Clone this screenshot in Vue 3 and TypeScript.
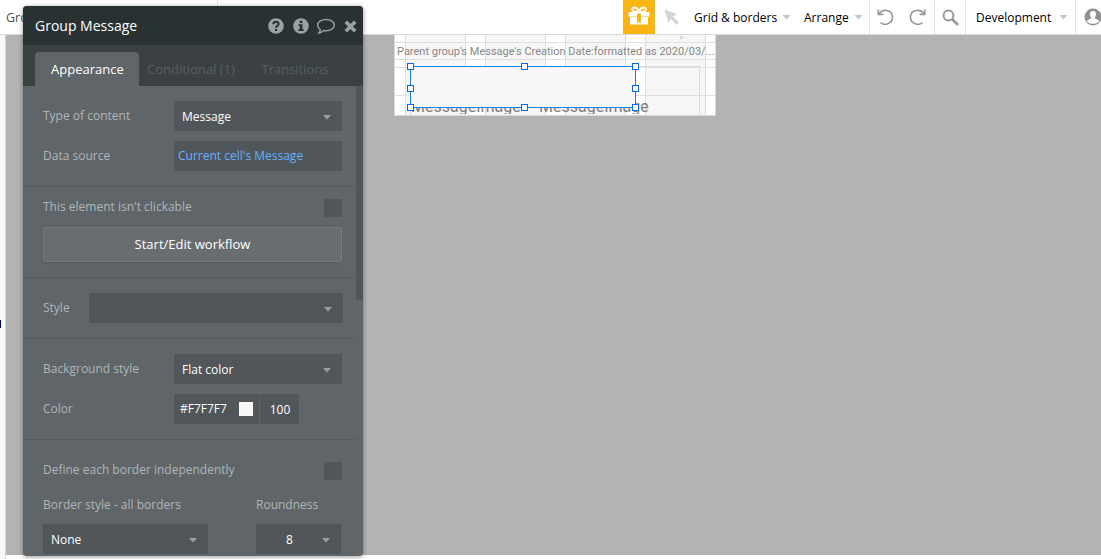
<script setup lang="ts">
const tabs: string[] = ['Appearance', 'Conditional (1)', 'Transitions']
const columns: number[] = [11, 71, 151, 231]
const rows: number[] = [8, 25, 33, 61]
const handles: [number, number][] = [
  [0, 0], [114, 0], [225, 0],
  [0, 22], [225, 22],
  [0, 41], [114, 41], [225, 41],
]
</script>

<template>
  <div class="app">
    <header class="topbar">
      <span class="crumb">Gro</span>
      <div class="crumb-line"></div>
      <div class="gift">
        <svg width="22" height="20" viewBox="0 0 22 20">
          <path d="M10 6C7 6 4 5.500 4 3.300 4 1 8 .2 11 5 14 .2 18 1 18 3.300 18 5.500 15 6 12 6" fill="none" stroke="#fff" stroke-width="1.800" />
          <path fill="#fff" d="M1.500 6h19q1 0 1 1v3.500h-21V7q0-1 1-1zM2 11h18v6.500q0 1-1 1H3q-1 0-1-1z" />
          <path fill="#fab515" d="M9 7.500h4v9H9z" />
        </svg>
      </div>
      <svg class="pointer" width="16" height="17" viewBox="0 0 16 17"><path fill="#d5d5d5" d="M.5.500 13 5.300 9 7.500l6 6-2.300 2.500-6-6.200L4.500 14z" /></svg>
      <span class="menu grid-menu">Grid &amp; borders</span><i class="arrow light"></i>
      <span class="menu arrange">Arrange</span><i class="arrow light"></i>
      <div class="group undo">
        <svg width="17" height="18" viewBox="0 0 17 18"><path d="M1.300 1.500v4.800h5.200M2 6.200C5 .3 15.500 1.300 15.500 9c0 7-8.500 9-12 5.500" fill="none" stroke="#999" stroke-width="1.700" /></svg>
        <svg width="17" height="18" viewBox="0 0 17 18"><path d="M15.700 1.500v4.800h-5.200M15 6.200C12 .3 1.500 1.300 1.500 9c0 7 8.500 9 12 5.500" fill="none" stroke="#999" stroke-width="1.700" /></svg>
      </div>
      <div class="group search">
        <svg width="17" height="17" viewBox="0 0 17 17"><circle cx="6.500" cy="6.500" r="4.900" fill="none" stroke="#999" stroke-width="2" /><path d="m10 10 6 6" stroke="#999" stroke-width="2.600" /></svg>
      </div>
      <div class="group dev"><span class="menu">Development</span><i class="arrow light"></i></div>
      <div class="group user">
        <svg width="18" height="18" viewBox="0 0 18 18"><circle cx="9" cy="9" r="8.500" fill="#909090" /><path fill="#fff" d="M9 3c2.200 0 3.300 1.600 3 3.700-.1 1.200-.6 2-1 2.600v1.200l3.200 1.400q.8.400.8 1.500C13.500 15 11.500 15.800 9 15.800S4.500 15 3 13.400q0-1.100.8-1.500L7 10.500V9.300C6.500 8.700 6.100 7.900 6 6.700 5.700 4.600 6.800 3 9 3z" /></svg>
      </div>
    </header>

    <main class="workspace">
      <aside class="rail"><i></i></aside>
      <section class="canvas">
        <div class="page">
          <i v-for="c in columns" :key="'c' + c" class="column" :style="{ left: c - 1 + 'px' }"></i>
          <i v-for="r in rows" :key="'r' + r" class="row-line" :style="{ top: r - 1 + 'px' }"></i>
          <i class="dot"></i>
          <div class="date">Parent group's Message's Creation Date:formatted as 2020/03/...</div>
          <div class="outer-group"></div>
          <div class="image-text first">MessageImage</div>
          <div class="image-text second">MessageImage</div>
          <div class="selected">
            <i v-for="(h, n) in handles" :key="n" class="handle" :style="{ left: h[0] - 4 + 'px', top: h[1] - 4 + 'px' }"></i>
          </div>
        </div>
      </section>
    </main>

    <div class="panel">
      <div class="title">
        <span>Group Message</span>
        <svg class="q" width="16" height="16" viewBox="0 0 16 16"><circle cx="8" cy="8" r="7.800" /><path d="M5.300 6.200C5.300 2.800 10.700 3 10.600 6 10.500 8 8 7.700 8 9.800" fill="none" stroke="#293133" stroke-width="2" /><path d="M7 11h2.200v2.100H7z" fill="#293133" /></svg>
        <svg class="info" width="16" height="16" viewBox="0 0 16 16"><circle cx="8" cy="8" r="7.800" /><path d="M6.700 2.700h2.700v2.200H6.700zM5.500 6.300h4v5h1.200v1.800H5.300v-1.800h1.400V8H5.500z" fill="#293133" /></svg>
        <svg class="chat" width="20" height="17" viewBox="0 0 20 17"><path d="M10 1.500c4.700 0 8.300 2.400 8.300 5.600s-3.600 5.700-8.300 5.700q-1.300 0-2.400-.2C6.200 14 4.500 15 2.800 15q1.400-1.500 1.500-3.500C2.600 10.400 1.600 8.900 1.600 7.100c0-3.200 3.700-5.600 8.400-5.600z" fill="none" stroke="#98a1a6" stroke-width="1.400" /></svg>
        <svg class="close" width="13" height="13" viewBox="0 0 13 13"><path d="m1.800 1.800 9.400 9.400m0-9.400-9.400 9.400" stroke="#98a1a6" stroke-width="3.700" /></svg>
      </div>
      <nav class="tabs">
        <div v-for="(tab, n) in tabs" :key="tab" class="tab" :class="['tab' + n, { active: n === 0 }]"><span>{{ tab }}</span></div>
      </nav>
      <div class="body">
        <div class="fields">
          <section class="s1">
            <div class="row"><label class="l-type">Type of content</label><div class="select wide"><span class="v-message">Message</span><i class="arrow"></i></div></div>
            <div class="row second-row"><label class="l-data">Data source</label><div class="select wide source"><span>Current cell's Message</span></div></div>
          </section>
          <section class="s2">
            <div class="row check-row"><label class="l-click">This element isn't clickable</label><i class="check"></i></div>
            <button><span>Start/Edit workflow</span></button>
          </section>
          <section class="s3">
            <div class="row"><label class="l-style">Style</label><div class="select style"><i class="arrow"></i></div></div>
          </section>
          <section class="s4">
            <div class="row"><label class="l-bg">Background style</label><div class="select wide"><span class="v-flat">Flat color</span><i class="arrow"></i></div></div>
            <div class="row second-row"><label class="l-color">Color</label>
              <div class="color"><span>#F7F7F7</span><i></i></div><div class="opacity">100</div>
            </div>
          </section>
          <section class="s5">
            <div class="row check-row"><label class="l-define">Define each border independently</label><i class="check"></i></div>
            <div class="pair">
              <div class="border-style"><label class="l-border">Border style - all borders</label><div class="select"><span>None</span><i class="arrow"></i></div></div>
              <div class="roundness"><label class="l-round">Roundness</label><div class="select"><span>8</span><i class="arrow"></i></div></div>
            </div>
          </section>
        </div>
        <div class="scroll"></div>
      </div>
    </div>
  </div>
</template>

<style>
html, body { margin: 0; overflow: hidden; }
</style>
<style scoped>
* { box-sizing: border-box; }
i { display: block; flex: none; }
svg { display: block; flex: none; }
.app { position: relative; width: 1101px; height: 559px; overflow: hidden; background: #fff; font: 12px "Open Sans", sans-serif; }
.topbar { display: flex; align-items: center; height: 35px; border-bottom: 1px solid #d9d9d9; color: #000; white-space: nowrap; }
.topbar > * { flex: none; }
.crumb { width: 217px; padding-left: 6px; font-size: 12.500px; color: #4a5053; }
.crumb-line { width: 1px; height: 34px; background: #e4e4e4; }
.gift { display: flex; align-items: center; justify-content: center; width: 32px; height: 34px; margin-left: 405px; background: #fab515; }
.gift svg { margin-top: -2px; }
.pointer { margin-left: 9px; }
.grid-menu { width: 88px; margin-left: 14px; }
.arrange { width: 50px; margin-left: 13px; }
.arrow { width: 9px; height: 5px; background: #9a9fa2; clip-path: polygon(0 0, 100% 0, 50% 100%); }
.arrow.light { background: #bfc8d0; }
.arrange + .arrow { margin-right: 6px; }
.group { display: flex; align-items: center; height: 34px; border-left: 1px solid #e4e4e4; }
.undo { width: 65px; padding-left: 7px; gap: 15px; }
.search { width: 31px; padding-left: 7px; }
.dev { width: 110px; padding-left: 10px; }
.dev .menu { width: 83px; }
.user { width: 26px; padding-left: 8px; }
.workspace { display: flex; height: 520px; }
.rail { width: 6px; height: 524px; padding-top: 285px; background: #f9f9f9; border-right: 1px solid #d5d5d5; }
.rail i { width: 1px; height: 8px; background: #000080; }
.canvas { flex: 1; background: #b3b3b3; padding-left: 388px; }
.page { position: relative; width: 322px; height: 81px; overflow: hidden; background: #fff; border: 1px solid #d9d9d9; border-top: 0; }
.column { position: absolute; top: 0; width: 61px; height: 81px; background: #f6f6f6; border: solid #dfdfdf; border-width: 0 1px; }
.column:nth-child(n+2) { margin-left: 20px; }
.row-line { position: absolute; left: 0; width: 320px; height: 1px; background: #dfdfdf; }
.dot { position: absolute; left: 285px; top: 1px; width: 3px; height: 3px; border: 1px solid #d5d5d5; }
.date { position: absolute; left: 2px; top: 8px; font: 11px/17px Roboto, sans-serif; color: #888; white-space: nowrap; }
.outer-group { position: absolute; left: 15px; top: 31px; width: 290px; height: 60px; border: 1px solid #d9d9d9; }
.image-text { position: absolute; top: 62px; height: 17px; overflow: hidden; font: 16px/20px Roboto, sans-serif; color: #7f7f7f; white-space: nowrap; }
.first { left: 16px; }
.second { left: 144px; }
.selected { position: absolute; left: 15px; top: 31px; width: 226px; height: 42px; background: #f7f7f7; border: 1px solid #1485e8; }
.handle { position: absolute; width: 7px; height: 7px; background: #fff; border: 1px solid #0866f5; }
.panel { position: absolute; left: 23px; top: 6px; width: 340px; height: 550px; overflow: hidden; border-radius: 4px; background: #5f6568; box-shadow: 0 1px 5px #0006; color: #fff; white-space: nowrap; }
.title { display: flex; height: 39px; align-items: center; padding: 1px 5px 0 12px; background: #293133; }
.title > span { width: 232.500px; margin-top: -1px; font-size: 14px; }
.title > span { flex: none; }
.title svg { fill: #98a1a6; }
.info { margin-left: 9px; }
.chat { margin-left: 7px; }
.close { margin-left: 8.500px; }
.tabs { display: flex; height: 41px; padding: 7px 0 0 12px; background: #3b4143; }
.tab { display: flex; align-items: center; height: 34px; font-size: 13px; color: #585f62; }
.tab0 { width: 104px; padding-left: 16px; }
.tab1 { width: 114px; padding-left: 8px; }
.tab2 { padding-left: 8.500px; }
.active { border-radius: 4px 4px 0 0; background: #5f6568; color: #fff; }
.body { display: flex; height: 464px; }
.fields { width: 333px; }
.scroll { width: 7px; height: 214px; background: #505659; }
section[class^="s"] { padding: 15px 14px 0 20px; border-bottom: 1px solid #555b5e; }
.row { display: flex; align-items: center; }
.second-row { margin-top: 10px; }
.s1 { height: 101px; }
.s2 { height: 91px; padding-top: 12px !important; }
.s3 { height: 61px; padding-right: 13px !important; }
.s4 { height: 101px; }
.s5 { padding-top: 22px !important; border: 0 !important; }
label { width: 131px; margin-top: -2px; color: #b1b6b8; font-size: 12px; }
.check-row { justify-content: space-between; height: 18px; }
.check-row label { width: auto; margin-top: -3px; }
.check { width: 18px; height: 18px; background: #505659; }
.select { display: flex; align-items: center; justify-content: space-between; height: 30px; padding: 1px 10.500px 0 8px; background: #505659; }
.select .arrow { margin-top: 1px; }
.wide { width: 168px; }
.source { padding-left: 4px; padding-top: 0; color: #66b0ff; }
.source span { margin-top: -1px; }
button { width: 299px; height: 35px; margin-top: 10px; padding: 0 0 2px; border: 1px solid #767b7e; border-radius: 2px; background: #686d70; color: #fff; font: 13px "Open Sans", sans-serif; box-shadow: 0 1px 2px #0002; }
.l-style { width: 46px; }
.style { width: 254px; justify-content: flex-end; }
.color { display: flex; align-items: center; justify-content: space-between; width: 85px; height: 30px; padding: 0 6px; background: #505659; }
.color span { margin-top: -1px; }
.color i { width: 14px; height: 14px; background: #f7f7f7; }
.opacity { width: 39px; height: 30px; padding-left: 1px; margin-left: 1px; text-align: center; line-height: 31px; background: #505659; }
.pair { display: flex; justify-content: space-between; width: 298px; margin-top: 16px; }
.pair label { display: block; width: auto; height: 28px; margin-top: 0; line-height: 18px; }
.border-style .select { width: 165px; }
.roundness { width: 85px; }
.roundness .select { padding-left: 30px; }
</style>
